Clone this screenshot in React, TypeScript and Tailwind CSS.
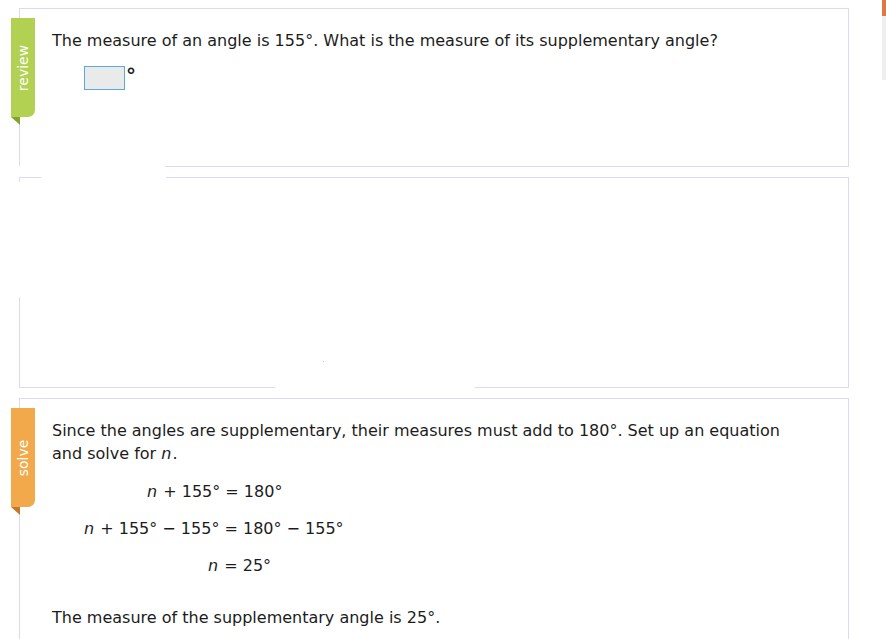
const font = { fontFamily: '"DejaVu Sans", Verdana, sans-serif' };

function Tab({ label, tone }: { label: string; tone: "green" | "orange" }) {
	const fill = tone === "green" ? "bg-[#b2d152]" : "bg-[#f2a94b]";
	const fold = tone === "green" ? "#86a332" : "#c4792a";
	return (
		<div className="absolute left-[-9px] top-[9px] w-[24px]">
			<div className={`${fill} flex h-[99px] w-[24px] items-center justify-center rounded-br-[7px]`}>
				<span className="-rotate-90 whitespace-nowrap text-[14px] leading-none text-white">{label}</span>
			</div>
			<svg width="9" height="8" className="block">
				<polygon points="0,0 9,0 9,8" fill={fold} />
			</svg>
		</div>
	);
}

function Gap({ className }: { className: string }) {
	return <span aria-hidden="true" className={`absolute bg-white ${className}`} />;
}

function Eq({ indent, children }: { indent: string; children: React.ReactNode }) {
	return <div className={`${indent} h-[23px] whitespace-pre`}>{children}</div>;
}

const N = () => <i className="mr-[1px]">n</i>;

export default function App() {
	return (
		<div className="relative min-h-[639px] w-[886px] overflow-hidden bg-white text-[16px] leading-[23px] text-[#1c1c1c]" style={font}>
			<div className="absolute right-0 top-0 flex w-[4px] flex-col">
				<div className="h-[16px] bg-[#e07844]" />
				<div className="h-[64px] bg-[#efefef]" />
			</div>

			<div className="flex w-[849px] flex-col gap-[10px] pl-[19px] pt-[8px]">
				<section className="relative h-[159px] border border-[#dcd8f5] px-[32px] pt-[20px]">
					<Tab label="review" tone="green" />
					<Gap className="bottom-[-1px] left-[-1px] h-[1px] w-[146px]" />
					<p>The measure of an angle is 155°. What is the measure of its supplementary angle?</p>
					<div className="ml-[32px] mt-[14px] flex items-start">
						<div className="h-[24px] w-[41px] border border-[#5ea7e2] bg-[#e9ebea]" />
						<span className="ml-[1px] mt-[-2px] text-[20px] font-bold leading-[23px]">°</span>
					</div>
				</section>

				<section className="relative h-[211px] border border-[#dcd8f5]">
					<Gap className="left-[21px] top-[-1px] h-[1px] w-[125px]" />
					<Gap className="left-[-1px] top-[4px] h-[115px] w-[1px]" />
					<Gap className="bottom-[-1px] left-[255px] h-[1px] w-[200px]" />
					<span aria-hidden="true" className="absolute left-[303px] top-[183px] h-[1px] w-[1px] bg-[#c8c8c8]" />
				</section>

				<section className="relative h-[260px] border border-[#dcd8f5] px-[32px] pt-[20px]">
					<Tab label="solve" tone="orange" />
					<p>Since the angles are supplementary, their measures must add to 180°. Set up an equation</p>
					<p>
						and solve for <N />.
					</p>
					<div className="mt-[15px] flex flex-col gap-[14px]">
						<Eq indent="ml-[95px]">
							<N /> + 155° = 180°
						</Eq>
						<Eq indent="ml-[32px]">
							<N /> + 155° − 155° = 180° − 155°
						</Eq>
						<Eq indent="ml-[156px]">
							<N /> = 25°
						</Eq>
					</div>
					<p className="mt-[29px]">The measure of the supplementary angle is 25°.</p>
				</section>
			</div>
		</div>
	);
}
